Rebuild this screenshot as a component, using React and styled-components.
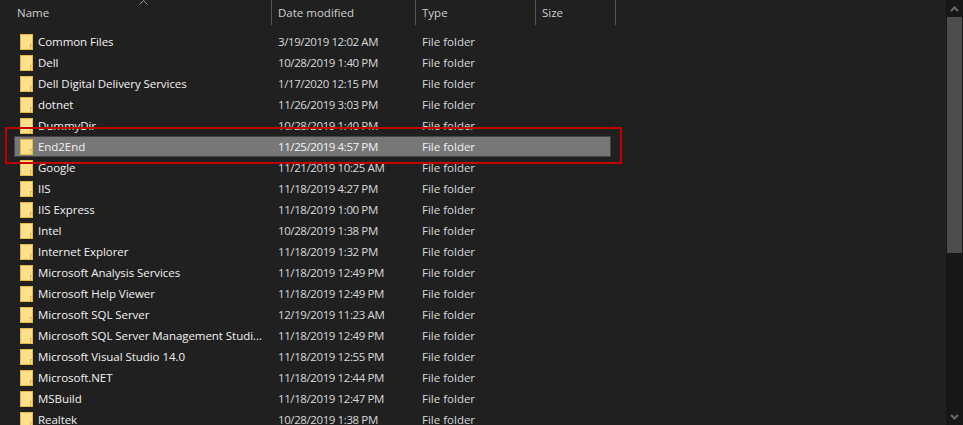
import React from "react";
import styled, { createGlobalStyle } from "styled-components";

const Global = createGlobalStyle`
  html, body { margin: 0; padding: 0; background: #202020; overflow: hidden; }
`;

const Window = styled.div`
  position: relative;
  display: flex;
  width: 963px;
  height: 425px;
  overflow: hidden;
  background: #202020;
  font-family: "Open Sans", "Noto Sans", "Liberation Sans", sans-serif;
  font-size: 11.5px;
  color: #f2f2f2;
`;

const Main = styled.div`
  flex: 1;
  min-width: 0;
  display: flex;
  flex-direction: column;
`;

const Header = styled.div`
  display: flex;
  height: 25px;
  padding-left: 11px;
  margin-bottom: 6px;
  flex: none;
`;

const HeaderCell = styled.div`
  width: ${(p) => p.$w}px;
  box-sizing: border-box;
  height: 25px;
  padding-left: 6px;
  line-height: 25px;
  color: #cfcfcf;
  border-right: 1px solid #555;
  white-space: nowrap;
`;

const SortArrow = styled.svg`
  position: absolute;
  left: 139px;
  top: 0;
`;

const Row = styled.div`
  display: flex;
  align-items: center;
  height: 21px;
  flex: none;
  box-sizing: border-box;
  margin-left: 14px;
  width: 597px;
  border: 1px solid ${(p) => (p.$selected ? "#444" : "transparent")};
  background: ${(p) => (p.$selected ? "#777" : "transparent")};
`;

const NameCell = styled.div`
  display: flex;
  align-items: center;
  width: 263px;
  padding-left: 5px;
  box-sizing: border-box;
  gap: 5px;
  letter-spacing: -0.05px;
  white-space: nowrap;
  overflow: hidden;
  flex: none;
`;

const DateCell = styled.div`
  width: 144px;
  flex: none;
  white-space: nowrap;
  letter-spacing: -0.4px;
  color: ${(p) => (p.$selected ? "#f2f2f2" : "#d8d8d8")};
`;

const TypeCell = styled.div`
  width: 120px;
  flex: none;
  white-space: nowrap;
  color: ${(p) => (p.$selected ? "#f2f2f2" : "#d8d8d8")};
`;

const Scrollbar = styled.div`
  width: 17px;
  flex: none;
  display: flex;
  flex-direction: column;
  align-items: center;
  background: #171717;
`;

const ScrollButton = styled.div`
  height: 17px;
  width: 100%;
  flex: none;
  display: flex;
  align-items: center;
  justify-content: center;
`;

const Thumb = styled.div`
  width: 15px;
  height: 236px;
  background: #4d4d4d;
  flex: none;
`;

const Track = styled.div`
  flex: 1;
`;

const Highlight = styled.div`
  position: absolute;
  left: 5px;
  top: 127px;
  width: 617px;
  height: 37px;
  box-sizing: border-box;
  border: 2px solid #c00000;
  pointer-events: none;
`;

const Folder = () => (
  <svg width="13" height="16" viewBox="0 0 13 16" style={{ flex: "none" }}>
    <rect x="0.5" y="0.5" width="12" height="15" fill="#ffe08a" stroke="#e8b945" />
    <rect x="10" y="10" width="3" height="6" fill="#e8b945" />
    <rect x="11" y="11" width="1" height="4" fill="#ffe08a" />
  </svg>
);

const rows = [
  ["Common Files", "3/19/2019 12:02 AM"],
  ["Dell", "10/28/2019 1:40 PM"],
  ["Dell Digital Delivery Services", "1/17/2020 12:15 PM"],
  ["dotnet", "11/26/2019 3:03 PM"],
  ["DummyDir", "10/28/2019 1:40 PM"],
  ["End2End", "11/25/2019 4:57 PM", true],
  ["Google", "11/21/2019 10:25 AM"],
  ["IIS", "11/18/2019 4:27 PM"],
  ["IIS Express", "11/18/2019 1:00 PM"],
  ["Intel", "10/28/2019 1:38 PM"],
  ["Internet Explorer", "11/18/2019 1:32 PM"],
  ["Microsoft Analysis Services", "11/18/2019 12:49 PM"],
  ["Microsoft Help Viewer", "11/18/2019 12:49 PM"],
  ["Microsoft SQL Server", "12/19/2019 11:23 AM"],
  ["Microsoft SQL Server Management Studi...", "11/18/2019 12:49 PM"],
  ["Microsoft Visual Studio 14.0", "11/18/2019 12:55 PM"],
  ["Microsoft.NET", "11/18/2019 12:44 PM"],
  ["MSBuild", "11/18/2019 12:47 PM"],
  ["Realtek", "10/28/2019 1:38 PM"],
];

export default function App() {
  return (
    <Window>
      <Global />
      <Main>
        <Header>
          <HeaderCell $w={261}>Name</HeaderCell>
          <HeaderCell $w={144}>Date modified</HeaderCell>
          <HeaderCell $w={120}>Type</HeaderCell>
          <HeaderCell $w={80}>Size</HeaderCell>
        </Header>
        {rows.map(([name, date, selected]) => (
          <Row key={name} $selected={selected}>
            <NameCell>
              <Folder />
              <span>{name}</span>
            </NameCell>
            <DateCell $selected={selected}>{date}</DateCell>
            <TypeCell $selected={selected}>File folder</TypeCell>
          </Row>
        ))}
      </Main>
      <Scrollbar>
        <ScrollButton>
          <svg width="9" height="6" viewBox="0 0 9 6">
            <path d="M1 5 L4.5 1.5 L8 5" fill="none" stroke="#6b6b6b" strokeWidth="2" />
          </svg>
        </ScrollButton>
        <Thumb />
        <Track />
        <ScrollButton>
          <svg width="9" height="6" viewBox="0 0 9 6">
            <path d="M1 1 L4.5 4.5 L8 1" fill="none" stroke="#6b6b6b" strokeWidth="2" />
          </svg>
        </ScrollButton>
      </Scrollbar>
      <SortArrow width="9" height="5" viewBox="0 0 9 5">
        <path d="M0.5 4.5 L4.5 0.5 L8.5 4.5" fill="none" stroke="#9a9a9a" strokeWidth="1" />
      </SortArrow>
      <Highlight />
    </Window>
  );
}
